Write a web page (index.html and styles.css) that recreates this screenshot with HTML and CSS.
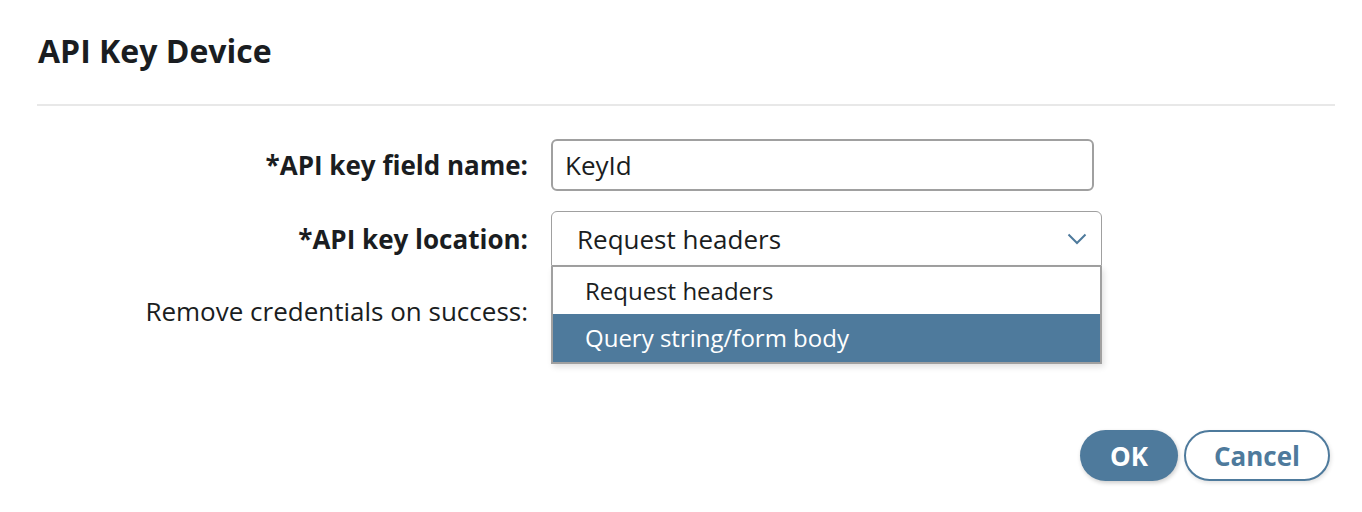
FILE: index.html
```html
<!DOCTYPE html>
<html>
<head>
<meta charset="utf-8">
<link rel="stylesheet" href="styles.css">
</head>
<body>
<div class="dialog">
  <div class="header">
    <h1 class="title">API Key Device</h1>
  </div>
  <div class="form">
    <label class="label req">*API key field name:</label>
    <div class="field"><div class="input">KeyId</div></div>
    <label class="label req">*API key location:</label>
    <div class="field select-wrap">
      <div class="select">
        <span>Request headers</span>
        <svg class="chev" width="20" height="12" viewBox="0 0 20 12"><path d="M1.5 1.5 L10 10 L18.5 1.5" fill="none" stroke="#4e7a9c" stroke-width="2"/></svg>
      </div>
      <ul class="menu">
        <li class="opt">Request headers</li>
        <li class="opt active">Query string/form body</li>
      </ul>
    </div>
    <label class="label last">Remove credentials on success:</label>
    <div class="field"></div>
  </div>
  <div class="footer">
    <button class="btn primary">OK</button>
    <button class="btn secondary">Cancel</button>
  </div>
</div>
</body>
</html>
```
FILE: styles.css
```css
html, body { margin: 0; padding: 0; background: #fff; }
body { font-family: "Open Sans", "Liberation Sans", sans-serif; color: #1a1d21; }
.dialog { width: 1362px; height: 512px; position: relative; }
.header { margin: 0 27px 0 37px; border-bottom: 2px solid #e8e8e8; padding: 29px 0 0 1px; height: 106px; box-sizing: border-box; }
.title { margin: 0; font-size: 32px; font-weight: 700; line-height: 44px; color: #1a1d21; }
.form { display: grid; grid-template-columns: 528px 551px; column-gap: 23px; row-gap: 20px; margin-top: 33px; align-items: center; }
.label { text-align: right; font-size: 26px; line-height: 34px; color: #1a1d21; }
.label.req { font-weight: 700; }
.label.last { line-height: 50px; }
.field { position: relative; }
.input { width: 543px; height: 52px; box-sizing: border-box; border: 2px solid #a0a0a0; border-radius: 6px; padding: 0 12px; font-size: 26px; line-height: 48px; }
.select { width: 551px; height: 55px; box-sizing: border-box; border: 1px solid #a0a0a0; border-radius: 6px 6px 0 0; padding: 0 25px; font-size: 26px; display: flex; align-items: center; justify-content: space-between; }
.chev { margin-right: -11px; }
.menu { position: absolute; top: 55px; left: 0; width: 551px; box-sizing: border-box; margin: 0; padding: 0; list-style: none; border: 2px solid #a0a0a0; border-top: 1px solid #a0a0a0; background: #fff; box-shadow: 2px 3px 6px rgba(0,0,0,0.12); z-index: 2; }
.opt { height: 47px; padding: 0 32px; font-size: 24px; line-height: 47px; color: #1a1d21; }
.opt.active { background: #4e7a9c; color: #fff; height: 48px; line-height: 48px; }
.footer { position: absolute; right: 32px; top: 430px; display: flex; gap: 6px; }
.btn { font-family: "Open Sans", "Liberation Sans", sans-serif; font-size: 26px; font-weight: 700; height: 51px; border-radius: 26px; box-sizing: border-box; cursor: pointer; padding: 0; }
.btn.primary { width: 98px; background: #4e7a9c; color: #fff; border: none; box-shadow: 1px 2px 4px rgba(0,0,0,0.2); }
.btn.secondary { width: 146px; background: #fff; color: #4e7a9c; border: 2px solid #4e7a9c; box-shadow: 1px 2px 4px rgba(0,0,0,0.12); }
```
